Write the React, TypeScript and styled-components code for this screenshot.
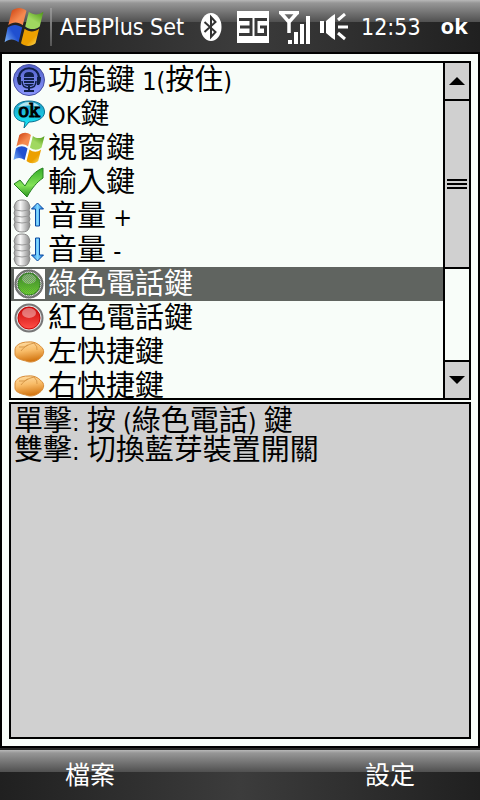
import React from "react";
import styled, { createGlobalStyle } from "styled-components";

const PAPER = "#f8fdf9";
const PANEL = "#d0d0d0";
const INK = "#000";
const LATIN_FONT = `"DejaVu Sans Condensed", "Noto Sans", sans-serif`;

const GlobalStyle = createGlobalStyle`
  * { box-sizing: border-box; }
  body { margin: 0; background: #000; }
  button { appearance: none; border: 0; margin: 0; padding: 0; background: none; color: inherit; font: inherit; }
  svg { display: block; flex: none; }
`;

const Screen = styled.div`
  display: flex;
  flex-direction: column;
  min-height: 100vh;
  color: ${INK};
  font-family: "Noto Sans CJK TC", sans-serif;
`;

const TitleBar = styled.header`
  display: flex;
  align-items: center;
  height: 54px;
  padding: 2px 12px 0 4px;
  color: #fff;
  font-family: ${LATIN_FONT};
  font-size: 23px;
  line-height: 32px;
  white-space: nowrap;
  border-bottom: 2px solid #000;
  background:
    linear-gradient(180deg, #b8b8b8 0, #969696 3px, #505050 22px, transparent 22px),
    linear-gradient(90deg, #202020 0, #3c3c3c 50%, #202020 100%);
`;

const StartButton = styled.button`
  display: flex;
  width: 42px;
`;

const Divider = styled.span`
  width: 2px;
  height: 38px;
  margin: 0 8px 0 4px;
  background: linear-gradient(180deg, #999, #555);
`;

const Title = styled.h1`
  flex: 1;
  margin: 0;
  font: inherit;
`;

const StatusIcons = styled.div`
  display: flex;
  align-items: center;
  gap: 10px;
`;

const Clock = styled.time`
  margin-left: 13px;
`;

const OkButton = styled.button`
  margin-left: 20px;
  padding-bottom: 4px;
  font-family: "Noto Sans", sans-serif;
  font-size: 22px;
  font-weight: 700;
`;

const Content = styled.main`
  flex: 1;
  display: flex;
  flex-direction: column;
  gap: 2px;
  padding: 7px;
  border: 2px solid ${INK};
  border-top: 0;
  background: ${PAPER};
`;

const ListBox = styled.section`
  display: flex;
  height: 339px;
  border: 2px solid ${INK};
`;

const List = styled.ul`
  flex: 1;
  margin: 0;
  padding: 0;
  list-style: none;
  overflow: hidden;
`;

const Row = styled.li<{ $selected?: boolean }>`
  display: flex;
  align-items: center;
  gap: 3px;
  height: 34px;
  padding-left: 2px;
  font-size: 29px;
  line-height: 29px;
  white-space: pre;
  color: ${(p) => (p.$selected ? "#fff" : INK)};
  background: ${(p) => (p.$selected ? "#606460" : "transparent")};
`;

const Label = styled.span`
  padding-bottom: 5px;
`;

const Latin = styled.span`
  font-family: ${LATIN_FONT};
  font-size: 25px;
  line-height: 20px;
`;

const ScrollBar = styled.div`
  display: flex;
  flex-direction: column;
  width: 26px;
  border-left: 2px solid ${INK};
`;

const ScrollButton = styled.button`
  display: flex;
  align-items: center;
  justify-content: center;
  height: 36px;
  background: ${PANEL};
`;

const Track = styled.div`
  flex: 1;
  border: solid ${INK};
  border-width: 2px 0;
`;

const Thumb = styled.div`
  display: flex;
  flex-direction: column;
  align-items: center;
  justify-content: center;
  gap: 2px;
  height: 65%;
  border-bottom: 2px solid ${INK};
  background: ${PANEL};
`;

const Grip = styled.span`
  width: 20px;
  height: 2px;
  background: ${INK};
`;

const Details = styled.section`
  flex: 1;
  padding: 0 3px;
  border: 2px solid ${INK};
  background: ${PANEL};
  font-size: 29px;
  line-height: 29px;
`;

const Line = styled.p`
  margin: 0;
  white-space: pre-wrap;
`;

const SoftKeys = styled.footer`
  display: grid;
  grid-template-columns: 1fr 1fr;
  height: 52px;
  padding: 0 30px;
  border-top: 2px solid #242624;
  color: #fff;
  font-size: 25px;
  line-height: 46px;
  background:
    linear-gradient(180deg, #b8b8b8 0, #969696 3px, #505050 22px, transparent 22px),
    linear-gradient(90deg, #202020 0, #3c3c3c 50%, #202020 100%);
`;

const SoftKey = styled.button<{ $side: "left" | "right" }>`
  text-align: ${(p) => p.$side};
  padding: 0 35px 4px;
`;

const FLAG = [
  ["M6 3 C10 0 14 0 18 3 L15 15 C11 12 7 12 3 15 Z", "#f58a50", "#c83808"],
  ["M20 4 C24 7 28 7 32 4 L29 16 C25 19 21 19 17 16 Z", "#a0d860", "#489410"],
  ["M2.500 17 C6.500 14 10.500 14 14.500 17 L11.500 29 C7.500 26 4 26 0 29 Z", "#80b8f8", "#2050d0"],
  ["M16.500 18 C20.500 21 24.500 21 28.500 18 L25.500 30 C21.500 33 17.500 33 13.500 30 Z", "#ffe870", "#eca000"],
];

const WindowsFlag = ({ size, id }: { size: number; id: string }) => (
  <svg width={size} height={size} viewBox="0 0 32 33" aria-hidden="true">
    <defs>
      {FLAG.map(([, light, dark], i) => (
        <linearGradient key={i} id={`${id}${i}`} x1={i % 2 ? "1" : "0"} y1={i > 1 ? "1" : "0"} x2="0.6" y2="0.6">
          <stop stopColor={i > 1 ? light : dark} />
          <stop offset="1" stopColor={i > 1 ? dark : light} />
        </linearGradient>
      ))}
    </defs>
    {FLAG.map(([d], i) => (
      <path key={i} d={d} fill={`url(#${id}${i})`} />
    ))}
  </svg>
);

const Bluetooth = () => (
  <svg width="27" height="28" viewBox="0 0 27 28" role="img" aria-label="Bluetooth">
    <ellipse cx="11" cy="14" rx="10.500" ry="14" fill="#fff" />
    <path d="M4.500 9 L15.500 19 L11 24 V4 L15.500 9 L4.500 19" fill="none" stroke="#333" strokeWidth="2" />
  </svg>
);

const ThreeG = () => (
  <svg width="32" height="32" viewBox="0 0 32 32" role="img" aria-label="3G">
    <path d="M0 0H32V32H0Z" fill="#fff" />
    <path d="M2 8.500H14V23.500H2 M3 16H14 M30 8.500H19V23.500H28.500V16H23" fill="none" stroke="#383838" strokeWidth="3" />
  </svg>
);

const Signal = () => (
  <svg width="31" height="33" viewBox="0 0 31 33" role="img" aria-label="Signal">
    <path d="M0 1.500H20 M2 2 L10 11 L18 2 M10 9V22" fill="none" stroke="#fff" strokeWidth="3.500" />
    <path d="M9 29h4v4h-4z M15 21h4v12h-4z M21 13h4v20h-4z M27 5h4v28h-4z" fill="#fff" />
  </svg>
);

const Speaker = () => (
  <svg width="28" height="28" viewBox="0 0 28 28" role="img" aria-label="Volume">
    <path d="M0 8h4v12H0z M6 8 L12 3 L15 1V27L12 25L6 20Z" fill="#fff" />
    <path d="M18 7 L25 1 M18 14H28 M18 20 L25 26" stroke="#fff" strokeWidth="3" />
  </svg>
);

const Microphone = () => (
  <svg width="32" height="32" viewBox="0 0 32 32" aria-hidden="true">
    <defs>
      <linearGradient id="mic" x1="0" y1="0" x2="0" y2="1">
        <stop stopColor="#5060c8" />
        <stop offset="1" stopColor="#8c98ff" />
      </linearGradient>
    </defs>
    <circle cx="16" cy="16" r="15.500" fill="url(#mic)" stroke="#4850a0" />
    <path d="M6 14C6 1 26 1 26 14" fill="none" stroke="#102048" strokeWidth="2" />
    <path d="M4 13h4v8H6q-2-2-2-8z M24 13h4q0 6-2 8h-2z M11 12q0-4 5-4t5 4v7q0 3-5 3t-5-3z M11 26h10v2H11z M15 22h2v5h-2z" fill="#102048" />
    <path d="M9 17q0 7 7 7t7-7" fill="none" stroke="#102048" strokeWidth="1.500" />
    <path d="M11 13.500h10 M11 16.500h10 M11 19.500h10" stroke="#7080e0" />
  </svg>
);

const OkBubble = () => (
  <svg width="32" height="32" viewBox="0 0 32 32" aria-hidden="true">
    <defs>
      <linearGradient id="bubble" x1="0" y1="0" x2="0" y2="1">
        <stop stopColor="#2098c0" />
        <stop offset="1" stopColor="#18f0ff" />
      </linearGradient>
    </defs>
    <path d="M16 3C25 3 31.500 7 31.500 14C31.500 20 24 24 16 24L11 30L12 24C5 23 1 20 1 14C1 7 7 3 16 3Z" fill="url(#bubble)" stroke="#087090" />
    <path d="M5 9Q9 4 16 4T27 9Q16 6 5 9Z" fill="#b0e4f0" />
    <text x="16" y="19" textAnchor="middle" fontFamily="DejaVu Serif" fontSize="18" stroke="#000" strokeWidth="1" fill="#000">ok</text>
  </svg>
);

const Check = () => (
  <svg width="32" height="32" viewBox="0 0 32 32" aria-hidden="true">
    <defs>
      <linearGradient id="check" x1="0" y1="0" x2="0" y2="1">
        <stop stopColor="#34ac28" />
        <stop offset="0.6" stopColor="#84e458" />
        <stop offset="1" stopColor="#28941c" />
      </linearGradient>
    </defs>
    <path d="M1 18L7 14L12 20C17 11 22 5 30 2V12C24 16 19 22 14 31Z" fill="url(#check)" stroke="#248020" />
  </svg>
);

const Volume = ({ down }: { down?: boolean }) => (
  <svg width="32" height="34" viewBox="0 0 32 34" aria-hidden="true">
    <defs>
      <linearGradient id="barrel">
        <stop stopColor="#999" />
        <stop offset="0.4" stopColor="#f8f8f8" />
        <stop offset="1" stopColor="#888" />
      </linearGradient>
      <linearGradient id="arrow">
        <stop stopColor="#1878e0" />
        <stop offset="0.5" stopColor="#80d8ff" />
        <stop offset="1" stopColor="#1878e0" />
      </linearGradient>
    </defs>
    <path d="M2 5Q3 1 9 1T16 5L17 8L16 11L17 14L16 17L17 20L16 23L17 26L16 29Q15 33 9 33T2 29L1 26L2 23L1 20L2 17L1 14L2 11L1 8Z" fill="url(#barrel)" stroke="#888" />
    <path d="M2 11q7 2 14 0 M2 17q7 2 14 0 M2 23q7 2 14 0" fill="none" stroke="#999" />
    <path
      d={down ? "M22.500 5h4v17h4L24.500 28L18.500 22h4z" : "M24.500 4L30.500 10h-4v17h-4V10H18.500z"}
      fill="url(#arrow)"
      stroke="#0848a0"
    />
  </svg>
);

const Lamp = ({ id, light, dark, halftone }: { id: string; light: string; dark: string; halftone?: boolean }) => (
  <svg width="32" height="30" viewBox="0 0 32 30" aria-hidden="true">
    <defs>
      <linearGradient id={id} x1="0" y1="0" x2="0" y2="1">
        <stop stopColor={dark} />
        <stop offset="1" stopColor={light} />
      </linearGradient>
      <pattern id={`${id}dots`} width="2" height="2" patternUnits="userSpaceOnUse">
        <path d="M0 0h1v1H0z M1 1h1v1H1z" fill="#606460" />
      </pattern>
    </defs>
    {halftone && <path d="M1 0h31v30H1z" fill="#fff" />}
    <circle cx="16" cy="15" r="13.500" fill="#e0e0e0" stroke="#777" strokeWidth="2" />
    <circle cx="16" cy="15" r="11" fill={`url(#${id})`} stroke={dark} />
    <ellipse cx="16" cy="10" rx="7" ry="5" fill="#fff" opacity="0.4" />
    {halftone && <circle cx="16" cy="15" r="14.500" fill={`url(#${id}dots)`} opacity="0.6" />}
  </svg>
);

const Bread = () => (
  <svg width="32" height="32" viewBox="0 0 32 32" aria-hidden="true">
    <defs>
      <linearGradient id="bread" x1="0" y1="0" x2="0.2" y2="1">
        <stop stopColor="#ffe0a8" />
        <stop offset="0.5" stopColor="#f8bc68" />
        <stop offset="1" stopColor="#d47814" />
      </linearGradient>
    </defs>
    <path d="M2 14C2 9 8 6 15 6C22 5 27 9 30 13C32 17 29 21 26 23C22 26 17 27 13 25C8 24 2 22 2 18Z" fill="url(#bread)" stroke="#d88c38" />
    <path d="M8 15Q12 9 21 7Q25 11 24 14 M6 11Q12 12 15 9" fill="none" stroke="#d89848" />
  </svg>
);

const KEYS: { icon: React.ReactNode; text: string; selected?: boolean }[] = [
  { icon: <Microphone />, text: "功能鍵 1(按住)" },
  { icon: <OkBubble />, text: "OK鍵" },
  { icon: <WindowsFlag size={32} id="row" />, text: "視窗鍵" },
  { icon: <Check />, text: "輸入鍵" },
  { icon: <Volume />, text: "音量 +" },
  { icon: <Volume down />, text: "音量 -" },
  { icon: <Lamp id="green" light="#70f020" dark="#289010" halftone />, text: "綠色電話鍵", selected: true },
  { icon: <Lamp id="red" light="#ff5048" dark="#c80808" />, text: "紅色電話鍵" },
  { icon: <Bread />, text: "左快捷鍵" },
  { icon: <Bread />, text: "右快捷鍵" },
];

/* Chinese characters are set larger than the Latin letters beside them. */
const mixed = (text: string) =>
  text.split(/([\u0020-\u007e]+)/).map((part, i) => (i % 2 ? <Latin key={i}>{part}</Latin> : part));

export default function App() {
  return (
    <Screen lang="zh-Hant">
      <GlobalStyle />
      <TitleBar>
        <StartButton aria-label="Start">
          <WindowsFlag size={40} id="start" />
        </StartButton>
        <Divider />
        <Title>AEBPlus Set</Title>
        <StatusIcons>
          <Bluetooth />
          <ThreeG />
          <Signal />
          <Speaker />
        </StatusIcons>
        <Clock>12:53</Clock>
        <OkButton>ok</OkButton>
      </TitleBar>
      <Content>
        <ListBox>
          <List role="listbox" aria-label="AEBPlus">
            {KEYS.map((k) => (
              <Row key={k.text} role="option" aria-selected={!!k.selected} $selected={k.selected}>
                {k.icon}
                <Label>{mixed(k.text)}</Label>
              </Row>
            ))}
          </List>
          <ScrollBar>
            <ScrollButton aria-label="Up">
              <svg width="16" height="8" viewBox="0 0 16 8"><path d="M8 0L16 8H0Z" /></svg>
            </ScrollButton>
            <Track>
              <Thumb><Grip /><Grip /><Grip /></Thumb>
            </Track>
            <ScrollButton aria-label="Down">
              <svg width="16" height="8" viewBox="0 0 16 8"><path d="M0 0H16L8 8Z" /></svg>
            </ScrollButton>
          </ScrollBar>
        </ListBox>
        <Details>
          <Line>{mixed("單擊: 按 (綠色電話) 鍵")}</Line>
          <Line>{mixed("雙擊: 切換藍芽裝置開關")}</Line>
        </Details>
      </Content>
      <SoftKeys>
        <SoftKey $side="left">檔案</SoftKey>
        <SoftKey $side="right">設定</SoftKey>
      </SoftKeys>
    </Screen>
  );
}
